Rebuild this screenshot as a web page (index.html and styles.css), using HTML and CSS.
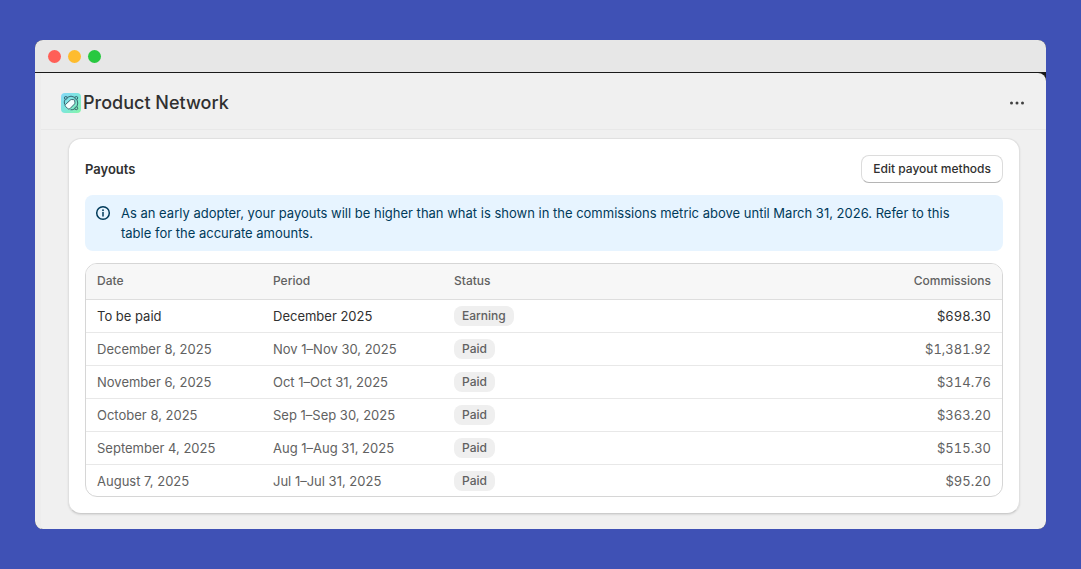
FILE: index.html
```html
<!DOCTYPE html>
<html lang="en">
<head>
<meta charset="utf-8">
<meta name="viewport" content="width=device-width, initial-scale=1">
<title>Product Network</title>
<link rel="stylesheet" href="styles.css">
</head>
<body>
<div class="window">
  <div class="titlebar">
    <span class="dot dot-close"></span>
    <span class="dot dot-minimize"></span>
    <span class="dot dot-zoom"></span>
  </div>
  <div class="viewport">
    <div class="app">
      <header class="app-header">
        <svg class="app-icon" viewBox="0 0 20 20" aria-hidden="true">
          <defs>
            <linearGradient id="app-bg" x1="0" y1="0" x2="1" y2="1">
              <stop offset="0" stop-color="#86d8f8"/>
              <stop offset="0.5" stop-color="#7ce6dc"/>
              <stop offset="1" stop-color="#86f5a6"/>
            </linearGradient>
          </defs>
          <rect width="20" height="20" rx="4" fill="url(#app-bg)"/>
          <g fill="none" stroke="#2b5360" stroke-width="0.900">
            <path d="M6.200 4.400Q10 1.900 13.800 4.400M15.900 6.400Q17.600 10 15.900 13.800M13.900 15.700Q11.800 17 9.500 16.800M3.600 11.500Q2.700 8.800 4.100 6.400"/>
            <circle cx="4.800" cy="4.900" r="1.400"/>
            <circle cx="15.300" cy="4.900" r="1.400"/>
            <circle cx="15.300" cy="15.300" r="1.400"/>
            <path fill="#f4ffff" d="M9.300 7.100q.6-.6 1.400-.6l2.100.2q.8.100.9.900l.2 2.100q.1.800-.5 1.400l-4.500 4.600q-1 1-2 0l-2.300-2.300q-1-1 0-2z"/>
          </g>
        </svg>
        <h1 class="app-title">Product Network</h1>
        <button class="menu-button" type="button" aria-label="More actions">
          <svg class="menu-icon" viewBox="0 0 16 16" aria-hidden="true" fill="#404040">
            <circle cx="2.500" cy="8" r="1.500"/><circle cx="8" cy="8" r="1.500"/><circle cx="13.500" cy="8" r="1.500"/>
          </svg>
        </button>
      </header>
      <main class="content">
        <section class="card">
          <div class="card-head">
            <h2 class="card-title">Payouts</h2>
            <button class="button" type="button">Edit payout methods</button>
          </div>
          <div class="banner">
            <svg class="banner-icon" viewBox="0 0 20 20" aria-hidden="true">
              <circle cx="10" cy="10" r="6.300" fill="none" stroke="#003a5a" stroke-width="1.500"/>
              <path d="M10 9.600v3.400" fill="none" stroke="#003a5a" stroke-width="1.500" stroke-linecap="round"/>
              <circle cx="10" cy="7.200" r="0.900" fill="#003a5a"/>
            </svg>
            <p class="banner-text">As an early adopter, your payouts will be higher than what is shown in the commissions metric above until March 31, 2026. Refer to this table for the accurate amounts.</p>
          </div>
          <div class="table-frame">
            <table class="payouts">
              <colgroup><col class="col-date"><col class="col-period"><col><col></colgroup>
              <thead>
                <tr><th scope="col">Date</th><th scope="col">Period</th><th scope="col">Status</th><th scope="col" class="amount">Commissions</th></tr>
              </thead>
              <tbody>
                <tr class="current"><td>To be paid</td><td>December 2025</td><td><span class="badge">Earning</span></td><td class="amount">$698.30</td></tr>
                <tr><td>December 8, 2025</td><td>Nov 1–Nov 30, 2025</td><td><span class="badge">Paid</span></td><td class="amount">$1,381.92</td></tr>
                <tr><td>November 6, 2025</td><td>Oct 1–Oct 31, 2025</td><td><span class="badge">Paid</span></td><td class="amount">$314.76</td></tr>
                <tr><td>October 8, 2025</td><td>Sep 1–Sep 30, 2025</td><td><span class="badge">Paid</span></td><td class="amount">$363.20</td></tr>
                <tr><td>September 4, 2025</td><td>Aug 1–Aug 31, 2025</td><td><span class="badge">Paid</span></td><td class="amount">$515.30</td></tr>
                <tr><td>August 7, 2025</td><td>Jul 1–Jul 31, 2025</td><td><span class="badge">Paid</span></td><td class="amount">$95.20</td></tr>
              </tbody>
            </table>
          </div>
        </section>
      </main>
    </div>
  </div>
</div>
</body>
</html>
```
FILE: styles.css
```css
* {
  box-sizing: border-box;
}

body {
  margin: 0;
  padding: 40px 35px;
  background: #3f51b5;
  color: #303030;
  font-family: Inter, "Liberation Sans", sans-serif;
  font-size: 13px;
  line-height: 20px;
}

h1, h2, p {
  margin: 0;
}

button {
  font: inherit;
  color: inherit;
}

.window {
  overflow: hidden;
  border-radius: 8px;
  background: #1a1a1a;
}

.titlebar {
  display: flex;
  align-items: center;
  gap: 7px;
  height: 32px;
  padding: 1px 13px 0;
  background: #e7e7e7;
}

.dot {
  width: 13px;
  height: 13px;
  border-radius: 50%;
}

.dot-close { background: #ff5f57; }
.dot-minimize { background: #febc2e; }
.dot-zoom { background: #28c840; }

.viewport {
  padding-top: 1px;
}

.app {
  border-left: 6px solid #ededed;
  border-radius: 0 8px 0 0;
  background: #f0f0f0;
}

.app-header {
  display: flex;
  align-items: center;
  gap: 2px;
  padding: 16px 21px 12px 20px;
  border-bottom: 1px solid #e8e8e8;
}

.app-icon {
  width: 20px;
  height: 20px;
}

.app-title {
  flex: 1;
  font-size: 18px;
  font-weight: 550;
  line-height: 28px;
}

.menu-button {
  display: flex;
  padding: 0;
  border: 0;
  background: none;
}

.menu-icon {
  width: 16px;
  height: 16px;
}

.content {
  padding: 8px 26px 15px 27px;
}

.card {
  display: flex;
  flex-direction: column;
  gap: 12px;
  padding: 16px;
  border: 1px solid #e0e0e0;
  border-bottom-color: #cccccc;
  border-radius: 13px;
  background: #ffffff;
  box-shadow: 0 1px 2px #0000001a;
}

.card-head {
  display: flex;
  align-items: center;
  justify-content: space-between;
}

.card-title {
  font-size: 13px;
  font-weight: 600;
}

.button {
  padding: 3px 11px;
  border: 1px solid #dcdcdc;
  border-bottom-color: #b5b5b5;
  border-radius: 8px;
  background: #ffffff;
  font-size: 12px;
  font-weight: 550;
}

.banner {
  display: flex;
  align-items: flex-start;
  gap: 8px;
  padding: 8px 40px 8px 8px;
  border-radius: 8px;
  background: #e7f4ff;
  color: #003a5a;
}

.banner-icon {
  flex: none;
  width: 20px;
  height: 20px;
}

.table-frame {
  overflow: hidden;
  border: 1px solid #d6d6d6;
  border-radius: 12px;
}

.payouts {
  width: 100%;
  border-collapse: separate;
  border-spacing: 0;
  color: #616161;
}

.col-date { width: 176px; }
.col-period { width: 181px; }

.payouts th,
.payouts td {
  padding: 0 11px;
  text-align: left;
}

.payouts th {
  height: 36px;
  padding-bottom: 2px;
  border-bottom: 1px solid #dedede;
  background: #f7f7f7;
  font-size: 12px;
  font-weight: 500;
}

.payouts td {
  height: 33px;
  border-bottom: 1px solid #e8e8e8;
}

.payouts tr:last-child td {
  height: 31px;
  border-bottom: 0;
}

.payouts tbody .current {
  color: #303030;
}

.payouts .amount {
  text-align: right;
  font-variant-numeric: tabular-nums;
}

.badge {
  display: block;
  width: fit-content;
  padding: 0 8px;
  border-radius: 8px;
  background: #efefef;
  color: #616161;
  font-size: 12px;
  font-weight: 500;
}
```
